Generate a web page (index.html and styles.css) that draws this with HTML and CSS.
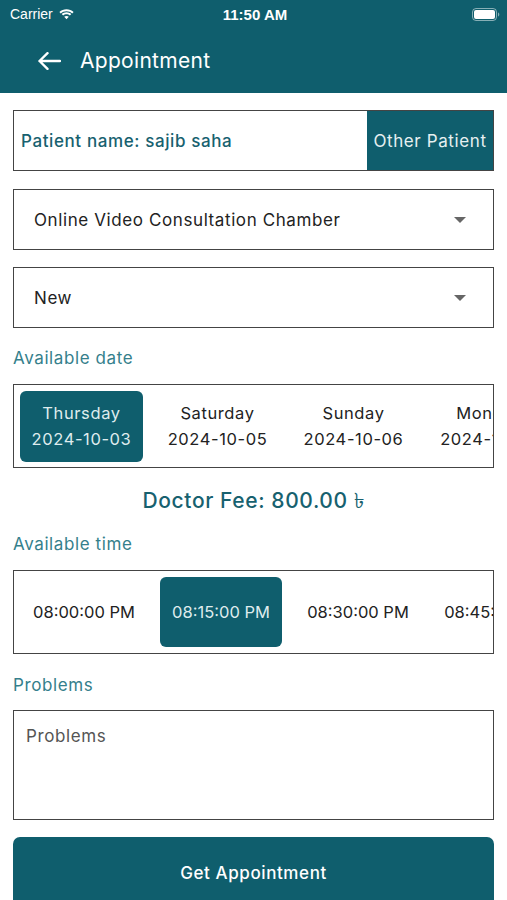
FILE: index.html
```html
<!DOCTYPE html>
<html lang="en">
<head>
    <meta charset="UTF-8">
    <meta name="viewport" content="width=device-width, initial-scale=1.0">
    <title>Appointment</title>
    <link rel="stylesheet" href="styles.css">
</head>
<body>
    <div class="top">
        <div class="status-bar">
            <div class="carrier">
                Carrier
                <svg class="wifi" width="17" height="12" viewBox="0 0 17 12">
                    <path d="M8.5 3.2c2.2 0 4.2.8 5.7 2.2l1.4-1.5C13.7 2.2 11.2 1.2 8.5 1.2S3.3 2.2 1.4 3.9l1.4 1.5c1.5-1.4 3.5-2.2 5.7-2.2z" fill="#fff"/>
                    <path d="M8.5 6.3c1.3 0 2.5.5 3.4 1.3l1.4-1.5c-1.3-1.2-3-1.9-4.8-1.9s-3.5.7-4.8 1.9l1.4 1.5c.9-.8 2.1-1.3 3.4-1.3z" fill="#fff"/>
                    <path d="M8.5 7.9c.9 0 1.7.3 2.3.8L8.5 11.2 6.2 8.7c.6-.5 1.4-.8 2.3-.8z" fill="#fff"/>
                </svg>
            </div>
            <div class="clock">11:50 AM</div>
            <div class="battery">
                <svg width="28" height="13" viewBox="0 0 28 13">
                    <rect x="0.5" y="0.5" width="24" height="12" rx="3.5" fill="none" stroke="rgba(255,255,255,0.5)"/>
                    <rect x="2" y="2" width="21" height="9" rx="2" fill="#fff"/>
                    <path d="M26 4.5v4c.8-.3 1.3-1.1 1.3-2s-.5-1.7-1.3-2z" fill="rgba(255,255,255,0.5)"/>
                </svg>
            </div>
        </div>
        <div class="app-bar">
            <svg class="back" width="23" height="18" viewBox="0 0 23 18">
                <path d="M1.5 9H22M9.5 1.2L1.5 9l8 7.8" fill="none" stroke="#fff" stroke-width="2.4" stroke-linecap="round" stroke-linejoin="round"/>
            </svg>
            <h1>Appointment</h1>
        </div>
    </div>

    <div class="content">
        <div class="patient-row">
            <div class="patient-name">Patient name: sajib saha</div>
            <button class="other-btn">Other Patient</button>
        </div>

        <div class="select-box">
            <span>Online Video Consultation Chamber</span>
            <span class="caret"></span>
        </div>

        <div class="select-box">
            <span>New</span>
            <span class="caret"></span>
        </div>

        <div class="label">Available date</div>
        <div class="scroller date-list">
            <div class="chip active"><div>Thursday</div><div>2024-10-03</div></div>
            <div class="chip"><div>Saturday</div><div>2024-10-05</div></div>
            <div class="chip"><div>Sunday</div><div>2024-10-06</div></div>
            <div class="chip"><div>Monday</div><div>2024-10-07</div></div>
        </div>

        <div class="fee">Doctor Fee: 800.00 ৳</div>

        <div class="label">Available time</div>
        <div class="scroller time-list">
            <div class="chip">08:00:00 PM</div>
            <div class="chip active">08:15:00 PM</div>
            <div class="chip">08:30:00 PM</div>
            <div class="chip">08:45:00 PM</div>
        </div>

        <div class="label problems-label">Problems</div>
        <textarea class="problems" placeholder="Problems"></textarea>

        <button class="submit">Get Appointment</button>
    </div>
</body>
</html>
```

FILE: styles.css
```css
body {
    margin: 0;
    font-family: 'Inter', 'Noto Sans', sans-serif;
    background-color: #fff;
    color: #222;
    width: 507px;
    height: 900px;
    overflow: hidden;
}
.top {
    background-color: #0f5e6d;
    color: #fff;
    height: 93px;
}
.status-bar {
    height: 28px;
    display: flex;
    align-items: center;
    justify-content: space-between;
    padding: 0 7px 0 10px;
    font-family: 'Liberation Sans', sans-serif;
    font-size: 14px;
}
.carrier {
    display: flex;
    align-items: center;
    gap: 5px;
    width: 120px;
}
.clock {
    font-weight: bold;
    font-size: 15px;
}
.battery {
    width: 120px;
    display: flex;
    justify-content: flex-end;
}
.app-bar {
    height: 65px;
    display: flex;
    align-items: center;
    padding-left: 38px;
}
.app-bar h1 {
    margin: 0 0 0 19px;
    font-weight: 400;
    font-size: 21px;
    letter-spacing: 0.3px;
}
.content {
    padding: 17px 13px 0;
    letter-spacing: 0.6px;
}
.patient-row {
    display: flex;
    height: 61px;
    border: 1.5px solid #444;
    box-sizing: border-box;
    margin-bottom: 18px;
}
.patient-name {
    flex: 1;
    display: flex;
    align-items: center;
    padding-left: 7px;
    color: #17616f;
    font-size: 17px;
    font-weight: 500;
}
.other-btn {
    background-color: #0f5e6d;
    color: #e6f0f1;
    border: none;
    font-family: inherit;
    font-size: 17px;
    letter-spacing: 0.6px;
    padding: 0 4px;
    width: 126px;
}
.select-box {
    height: 61px;
    border: 1.5px solid #444;
    box-sizing: border-box;
    display: flex;
    align-items: center;
    justify-content: space-between;
    padding: 0 27px 0 20px;
    font-size: 17px;
    color: #222;
    margin-bottom: 17px;
}
.caret {
    width: 0;
    height: 0;
    border-left: 6px solid transparent;
    border-right: 6px solid transparent;
    border-top: 6px solid #666;
}
.label {
    color: #357f8c;
    font-size: 17px;
    line-height: 20px;
    padding-top: 3px;
    margin-bottom: 16px;
}
.scroller {
    border: 1.5px solid #444;
    box-sizing: border-box;
    height: 84px;
    display: flex;
    align-items: center;
    gap: 13px;
    padding: 0 6px;
    overflow: hidden;
    white-space: nowrap;
}
.chip {
    flex: 0 0 123px;
    height: 71px;
    border-radius: 6px;
    display: flex;
    flex-direction: column;
    align-items: center;
    justify-content: center;
    font-size: 16.5px;
    line-height: 26px;
    color: #222;
}
.chip.active {
    background-color: #0f5e6d;
    color: #dfecee;
}
.fee {
    text-align: center;
    color: #17616f;
    font-size: 21px;
    line-height: 26px;
    font-weight: 500;
    margin: 20px 0 17px;
}
.time-list {
    gap: 15px;
    padding-left: 9px;
    margin-bottom: 18px;
}
.time-list .chip {
    flex-basis: 122px;
    height: 70px;
    letter-spacing: 0;
}
.problems-label {
    margin-bottom: 15px;
}
.problems {
    display: block;
    width: 100%;
    height: 110px;
    box-sizing: border-box;
    border: 1.5px solid #444;
    border-radius: 0;
    padding: 15px 12px;
    font-family: inherit;
    font-size: 17px;
    letter-spacing: 0.6px;
    resize: none;
    margin: 0 0 17px;
}
.problems::placeholder {
    color: #555;
}
.submit {
    display: block;
    width: 100%;
    height: 72px;
    background-color: #0f5e6d;
    color: #fff;
    border: none;
    border-radius: 7px;
    font-family: inherit;
    font-size: 17px;
    font-weight: 500;
    letter-spacing: 0.6px;
    padding-bottom: 2px;
}
```
